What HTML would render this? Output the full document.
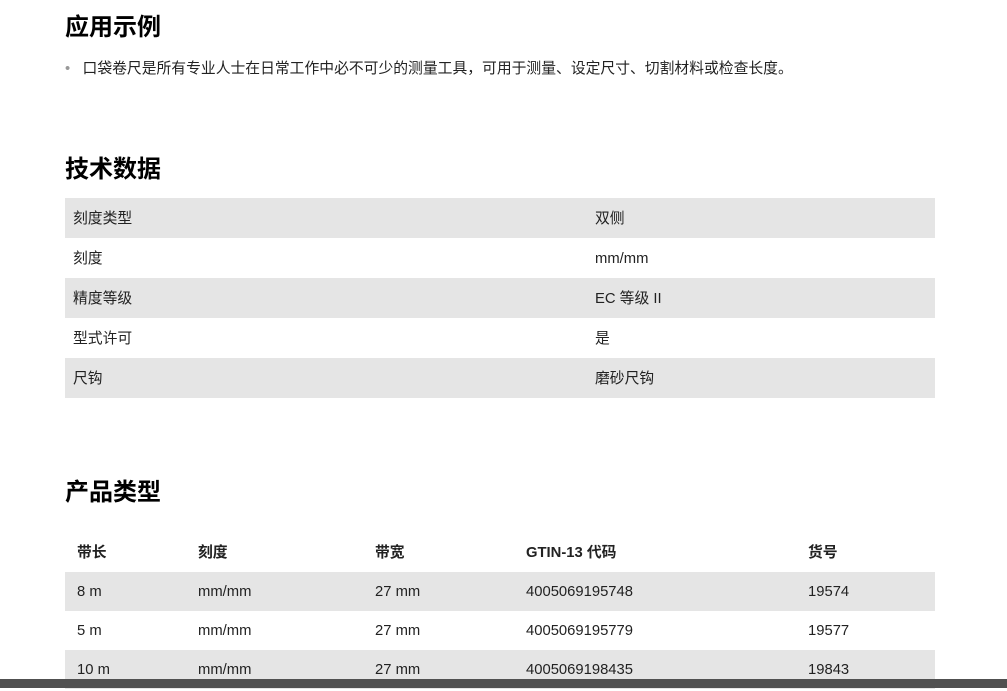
<!DOCTYPE html>
<html><head><meta charset="utf-8"><style>
body{margin:0;width:1007px;height:688px;overflow:hidden;background:#fff;font-family:"Liberation Sans","Noto Sans CJK SC",sans-serif;color:#222;font-size:14.8px;position:relative}
h2{position:absolute;left:65px;margin:0;font-size:24px;font-weight:bold;color:#000;line-height:30px}
.t{position:absolute;left:65px;width:870px}
.r{height:40px;line-height:42px;position:relative}
.g{background:#e5e5e5}
.r span{position:absolute}
.p .r{height:39px;line-height:41px}
.bar{position:absolute;left:0;top:679px;width:1007px;height:9px;background:#505050}
</style></head><body>
<h2 style="top:13px">应用示例</h2>
<div style="position:absolute;left:65px;top:59px;line-height:20px"><span style="color:#999">•</span>&nbsp;&nbsp;&nbsp;口袋卷尺是所有专业人士在日常工作中必不可少的测量工具，可用于测量、设定尺寸、切割材料或检查长度。</div>
<h2 style="top:155px">技术数据</h2>
<div class="t" style="top:198px">
<div class="r g"><span style="left:8px">刻度类型</span><span style="left:530px">双侧</span></div>
<div class="r"><span style="left:8px">刻度</span><span style="left:530px">mm/mm</span></div>
<div class="r g"><span style="left:8px">精度等级</span><span style="left:530px">EC 等级 II</span></div>
<div class="r"><span style="left:8px">型式许可</span><span style="left:530px">是</span></div>
<div class="r g"><span style="left:8px">尺钩</span><span style="left:530px">磨砂尺钩</span></div>
</div>
<h2 style="top:478px">产品类型</h2>
<div class="t p" style="top:533px">
<div class="r" style="font-weight:bold"><span style="left:12px">带长</span><span style="left:133px">刻度</span><span style="left:310px">带宽</span><span style="left:461px">GTIN-13 代码</span><span style="left:743px">货号</span></div>
<div class="r g"><span style="left:12px">8 m</span><span style="left:133px">mm/mm</span><span style="left:310px">27 mm</span><span style="left:461px">4005069195748</span><span style="left:743px">19574</span></div>
<div class="r"><span style="left:12px">5 m</span><span style="left:133px">mm/mm</span><span style="left:310px">27 mm</span><span style="left:461px">4005069195779</span><span style="left:743px">19577</span></div>
<div class="r g"><span style="left:12px">10 m</span><span style="left:133px">mm/mm</span><span style="left:310px">27 mm</span><span style="left:461px">4005069198435</span><span style="left:743px">19843</span></div>
</div>
<div class="bar"></div>
</body></html>
